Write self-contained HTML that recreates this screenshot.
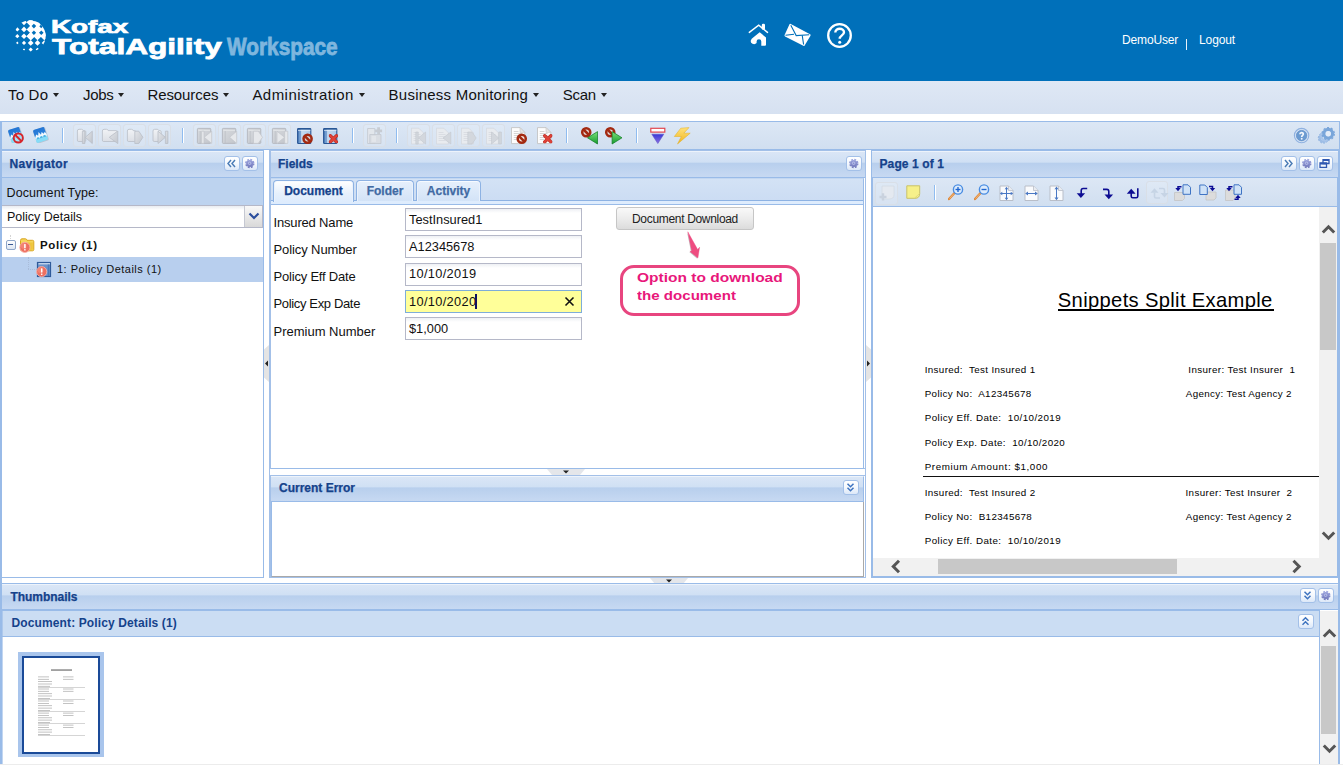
<!DOCTYPE html>
<html>
<head>
<meta charset="utf-8">
<title>Kofax TotalAgility Workspace</title>
<style>
*{box-sizing:border-box;margin:0;padding:0}
html,body{width:1343px;height:765px;overflow:hidden;background:#fff;font-family:"Liberation Sans",sans-serif;}
body{position:relative}
.abs{position:absolute}
#hdr{position:absolute;left:0;top:0;width:1343px;height:81px;background:#0070ba}
#menu{position:absolute;left:0;top:81px;width:1343px;height:33px;background:linear-gradient(#dfe8f5,#d6e1f1)}
#menu .mi{position:absolute;top:5px;font-size:15px;color:#111;line-height:18px;white-space:nowrap}
#menu .ar{position:absolute;top:12px;width:0;height:0;border-left:3px solid transparent;border-right:3px solid transparent;border-top:4px solid #222}
#tb{position:absolute;left:0;top:121px;width:1340px;height:29px;border:1px solid #99bbe8;border-left-width:2px;border-right-width:1px;border-bottom-width:1.500px;background:linear-gradient(#dce7f5,#d1dff0)}
.dbtn{position:absolute;top:1.500px;width:22.500px;height:23px;border:1px solid #d9dfe7;border-radius:3px;background:rgba(255,255,255,0.12)}
.sep{position:absolute;top:6px;width:2px;height:15px;border-left:1px solid #8fbcf0;border-right:1px solid #fff}
.ico{position:absolute;width:16px;height:16px}
.panel{position:absolute;border:1px solid #99bbe8;background:#fff}
.phd{position:absolute;left:0;top:0;right:0;height:27px;border-bottom:1px solid #99bbe8;background:linear-gradient(#dae6f6 0%,#d0e0f4 40%,#b8cfed 46%,#c7d9f2 100%);border-top:1px solid #edf3fb}
.phd .t{position:absolute;left:7px;top:5px;font-size:12px;font-weight:bold;color:#15428b;-webkit-text-stroke:0.250px #15428b;line-height:15px;white-space:nowrap}
.tool{position:absolute;margin-top:-0.800px;width:16px;height:15px;border:1px solid #a3c0e8;border-radius:3px;background:linear-gradient(#ffffff 0%,#f4f8fd 50%,#dce8f8 100%)}
.tool svg{position:absolute;left:0.200px;top:0}
.lbl{position:absolute;left:2.500px;font-size:13px;color:#111;line-height:16px;white-space:nowrap}
.inp{position:absolute;left:134px;width:177px;height:23px;border:1px solid #b5b8c8;background:#fff linear-gradient(#eef0f4,#fff 4px);font-size:12.800px;color:#111;line-height:16px;padding:2px 0 0 3px;white-space:nowrap}
.dl{position:absolute;font-size:9.800px;color:#000;line-height:12px;white-space:pre}
.tab{position:absolute;top:29px;height:21px;border:1px solid #8db2e3;border-bottom:0;border-radius:4px 4px 0 0;background:linear-gradient(#e6f0fc,#d3e3f7);box-shadow:inset 0 1px 0 #f6faff,inset 1px 0 0 #eaf2fc,inset -1px 0 0 #eaf2fc;font-size:12px;font-weight:bold;color:#416aa3;-webkit-text-stroke:0.250px #416aa3;text-align:center;line-height:15px;padding-top:2.500px}
.tab.act{height:22px;background:linear-gradient(#ffffff,#e6f0fc 60%,#deecfd);color:#15428b;-webkit-text-stroke:0.250px #15428b}
#tb svg{overflow:visible}
</style>
</head>
<body>
<div id="hdr">
<svg class="abs" style="left:0;top:0" width="60" height="70"><defs><clipPath id="gc"><circle cx="30" cy="36" r="15.700"/></clipPath></defs><g clip-path="url(#gc)" fill="#fff"><path d="M21.10 22.35L24.00 19.45L26.90 22.35L24.00 25.25Z"/><path d="M27.10 22.35L30.70 18.75L34.30 22.35L30.70 25.95Z"/><path d="M15.10 29.40L17.30 27.20L19.50 29.40L17.30 31.60Z"/><path d="M21.20 29.40L24.00 26.60L26.80 29.40L24.00 32.20Z"/><path d="M15.20 36.20L17.30 34.10L19.40 36.20L17.30 38.30Z"/><path d="M21.20 36.20L24.00 33.40L26.80 36.20L24.00 39.00Z"/><path d="M16.00 42.90L17.30 41.60L18.60 42.90L17.30 44.20Z"/><path d="M21.90 42.90L24.00 40.80L26.10 42.90L24.00 45.00Z"/><path d="M27.80 42.90L30.70 40.00L33.60 42.90L30.70 45.80Z"/><path d="M34.70 42.90L37.50 40.10L40.30 42.90L37.50 45.70Z"/><path d="M41.70 42.90L44.30 40.30L46.90 42.90L44.30 45.50Z"/><path d="M22.80 49.60L24.00 48.40L25.20 49.60L24.00 50.80Z"/><path d="M28.60 49.60L30.70 47.50L32.80 49.60L30.70 51.70Z"/><path d="M35.70 49.60L37.50 47.80L39.30 49.60L37.50 51.40Z"/><rect x="30.7" y="22.35" width="17" height="13.85"/><path d="M26.50 22.35L30.70 18.15L34.90 22.35L30.70 26.55Z"/><path d="M26.60 36.20L30.70 32.10L34.80 36.20L30.70 40.30Z"/><path d="M33.30 22.35L37.50 18.15L41.70 22.35L37.50 26.55Z"/><path d="M33.40 36.20L37.50 32.10L41.60 36.20L37.50 40.30Z"/><path d="M40.10 22.35L44.30 18.15L48.50 22.35L44.30 26.55Z"/><path d="M40.20 36.20L44.30 32.10L48.40 36.20L44.30 40.30Z"/><path d="M26.60 29.40L30.70 25.30L34.80 29.40L30.70 33.50Z"/><path d="M26.60 36.20L30.70 32.10L34.80 36.20L30.70 40.30Z"/><path d="M31.60 26.10L33.90 23.80L36.20 26.10L33.90 28.40Z" fill="#0070ba"/><path d="M39.30 26.30L41.20 24.40L43.10 26.30L41.20 28.20Z" fill="#0070ba"/><path d="M31.70 32.80L33.90 30.60L36.10 32.80L33.90 35.00Z" fill="#0070ba"/><path d="M39.00 32.80L41.30 30.50L43.60 32.80L41.30 35.10Z" fill="#0070ba"/></g></svg>
<div class="abs" style="left:51px;top:15.500px;font-size:18.200px;font-weight:bold;color:#fff;line-height:22px;-webkit-text-stroke:0.700px #fff;transform-origin:0 0;transform:scaleX(1.53);white-space:nowrap">Kofax</div>
<div class="abs" style="left:51.500px;top:34px;font-size:22.500px;font-weight:bold;color:#fff;line-height:26px;-webkit-text-stroke:0.750px #fff;transform-origin:0 0;transform:scaleX(1.405);white-space:nowrap">TotalAgility</div>
<div class="abs" style="left:227px;top:34px;font-size:23px;font-weight:bold;color:#7fb6de;line-height:26px;-webkit-text-stroke:0.800px #7fb6de;transform-origin:0 0;transform:scaleX(0.905);white-space:nowrap">Workspace</div>
<svg class="abs" style="left:746px;top:20px" width="28" height="30" viewBox="0 0 28 30"><path d="M3.300 12.400 L12.700 5.100 L21.500 12.400" fill="none" stroke="#fff" stroke-width="1.400" stroke-linecap="round"/><rect x="15.800" y="3.800" width="3.200" height="6" rx="1.300" fill="#fff"/><path d="M13.700 12.300 L20 17.500 L20 24.800 Q20 25.800 19 25.800 L15.300 25.800 L15.300 21.500 Q15.300 19.300 13 19.300 Q10.600 19.300 10.600 21.500 L10.600 23 Q9 24.800 6.500 23.800 Q4.300 22.800 4.800 20.500 Q5.300 18.500 7.500 17.300 Z" fill="#fff"/></svg>
<svg class="abs" style="left:782px;top:22px" width="32" height="28" viewBox="0 0 32 28"><path d="M8.300 2.800 L27.600 13.200 L21.800 22.900 L3.500 13.500 Z" fill="#fff" stroke="#fff" stroke-width="2" stroke-linejoin="round"/><path d="M8.800 3.200 L14.200 13.600 L27.200 12.800 M3.500 13.200 L12 12.200 M21.600 22.500 L20.300 13.800" fill="none" stroke="#0070ba" stroke-width="1.100"/></svg>
<svg class="abs" style="left:825px;top:21px" width="30" height="30" viewBox="0 0 30 30"><circle cx="14.500" cy="14.500" r="11.300" fill="none" stroke="#fff" stroke-width="2.300"/><path d="M10.300 11.500 C10.300 6.500 19 6.500 19 11.300 C19 14.500 14.700 14.300 14.700 17.800" fill="none" stroke="#fff" stroke-width="2.400"/><circle cx="14.700" cy="21.300" r="1.500" fill="#fff"/></svg>
<div class="abs" style="left:1122px;top:33px;font-size:12px;color:#fff;line-height:14px;white-space:nowrap;letter-spacing:-0.150px">DemoUser</div>
<div class="abs" style="left:1185.500px;top:39px;width:1.500px;height:10.500px;background:#e8f1f9"></div>
<div class="abs" style="left:1199px;top:33px;font-size:12px;color:#fff;line-height:14px;white-space:nowrap;letter-spacing:-0.100px">Logout</div>
</div>
<div id="menu">
<div class="mi" style="left:8px;letter-spacing:0.2px">To Do</div><div class="ar" style="left:53px"></div>
<div class="mi" style="left:83px;letter-spacing:-0.3px">Jobs</div><div class="ar" style="left:118px"></div>
<div class="mi" style="left:147.5px;letter-spacing:-0.1px">Resources</div><div class="ar" style="left:223px"></div>
<div class="mi" style="left:252.4px;letter-spacing:0.46px">Administration</div><div class="ar" style="left:359px"></div>
<div class="mi" style="left:388.6px;letter-spacing:0.23px">Business Monitoring</div><div class="ar" style="left:533px"></div>
<div class="mi" style="left:562.8px;letter-spacing:-0.3px">Scan</div><div class="ar" style="left:601px"></div>
</div>
<svg width="0" height="0" style="position:absolute">
<defs>
<linearGradient id="gGrey" x1="0" y1="0" x2="0" y2="1"><stop offset="0" stop-color="#dfe3e8"/><stop offset="1" stop-color="#c6ccd4"/></linearGradient>
<linearGradient id="gBlueImg" x1="0" y1="0" x2="0" y2="1"><stop offset="0" stop-color="#2375d4"/><stop offset="0.600" stop-color="#2f86de"/><stop offset="0.610" stop-color="#a6e4f8"/><stop offset="1" stop-color="#7ed8f6"/></linearGradient>
<linearGradient id="gFoldL" x1="0" y1="0" x2="0" y2="1"><stop offset="0" stop-color="#f1f3f6"/><stop offset="1" stop-color="#dcdfe5"/></linearGradient><linearGradient id="gArrG" x1="0" y1="0" x2="1" y2="1"><stop offset="0" stop-color="#e3e5e9"/><stop offset="1" stop-color="#c2c6cd"/></linearGradient><linearGradient id="gBookG" x1="0" y1="0" x2="1" y2="1"><stop offset="0" stop-color="#d8dbdf"/><stop offset="1" stop-color="#c3c6cc"/></linearGradient><linearGradient id="gGear" x1="0" y1="1.500" x2="0" y2="11" gradientUnits="userSpaceOnUse"><stop offset="0" stop-color="#a3ace3"/><stop offset="1" stop-color="#6d74b9"/></linearGradient><linearGradient id="gGreen" x1="0" y1="0" x2="0" y2="1"><stop offset="0" stop-color="#7be27b"/><stop offset="1" stop-color="#149a2c"/></linearGradient>
<linearGradient id="gPurple" x1="0" y1="0" x2="0" y2="1"><stop offset="0" stop-color="#3a3ad8"/><stop offset="1" stop-color="#8a6fe0"/></linearGradient>
<linearGradient id="gYel" x1="0" y1="0" x2="0" y2="1"><stop offset="0" stop-color="#ffe27a"/><stop offset="1" stop-color="#f0b41c"/></linearGradient>
<linearGradient id="gBook" x1="0" y1="0" x2="1" y2="0"><stop offset="0" stop-color="#3a6cb0"/><stop offset="0.220" stop-color="#8fb6de"/><stop offset="0.300" stop-color="#c6dbf0"/><stop offset="1" stop-color="#a9c8e8"/></linearGradient>
<symbol id="sImg" viewBox="0 0 16 16"><g transform="rotate(-18.600 7.500 8) translate(7.500 8) scale(1.070) translate(-7.500 -8)"><rect x="1.900" y="1.800" width="11.800" height="13.200" rx="1.500" fill="#9aa7b5" opacity="0.500"/><rect x="2" y="1.600" width="11" height="12.500" rx="1.500" fill="url(#gBlueImg)"/><path d="M2 8.800 L3.800 6.300 L5.200 8 L6.600 4.800 L8 8 L9.400 5.600 L10.800 7.800 L11.900 6.500 L13 8 L13 10.300 L2 10.300 Z" fill="#eef8fe"/><circle cx="4.300" cy="10.600" r="1.400" fill="#4fb6e6"/><circle cx="7.500" cy="10.600" r="1.400" fill="#4fb6e6"/><circle cx="10.700" cy="10.600" r="1.400" fill="#4fb6e6"/><rect x="2" y="11" width="11" height="3.100" rx="1" fill="#86dcf7"/></g></symbol>
<symbol id="sNo" viewBox="0 0 10 10"><circle cx="5" cy="5" r="3.800" fill="#bfe9fa" fill-opacity="0.600" stroke="#d6262c" stroke-width="1.600"/><path d="M2.300 2.300 L7.700 7.700" stroke="#d6262c" stroke-width="1.600"/></symbol>
<symbol id="sNoD" viewBox="0 0 10 10"><circle cx="5" cy="5" r="3.500" fill="#ecd5cc" fill-opacity="0.600" stroke="#a32a12" stroke-width="2.200"/><path d="M2.400 2.400 L7.600 7.600" stroke="#a32a12" stroke-width="2.200"/></symbol>
<symbol id="sX" viewBox="0 0 10 10"><path d="M1.800 1.800 L8.200 8.200 M8.200 1.800 L1.800 8.200" stroke="#b8281f" stroke-width="3.400" stroke-linecap="round"/><path d="M1.800 1.800 L8.200 8.200 M8.200 1.800 L1.800 8.200" stroke="#de4238" stroke-width="2.300" stroke-linecap="round"/></symbol>
<symbol id="sFold" viewBox="0 0 16 16"><path d="M1.500 3.500 Q1.500 2 3 2 L6.500 2 Q7.800 2 8 3 L11 3 Q12 3 12 4.200 L12 12.500 Q12 13.500 11 13.500 L2.500 13.500 Q1.500 13.500 1.500 12.500 Z" fill="url(#gGrey)" stroke="#cdd3db" stroke-width="0.6"/></symbol>
<symbol id="sBookG" viewBox="0 0 16 16"><path d="M1.500 1.500 L13.500 1.500 L13.500 14.500 L1.500 14.500 Z" fill="url(#gGrey)" stroke="#c4cad2" stroke-width="0.8"/><path d="M3.800 2 L3.800 14" stroke="#c0c6ce" stroke-width="0.8"/><path d="M2 3.500 L13 3.500" stroke="#e9ecf0" stroke-width="0.8"/></symbol>
<symbol id="sBookB" viewBox="0 0 16 18"><rect x="0.600" y="1.500" width="13.200" height="15" rx="0.800" fill="url(#gBook)" stroke="#2a5796" stroke-width="1.100"/><path d="M1 3.300 H13.400" stroke="#e9f1fa" stroke-width="0.800"/><path d="M0.800 2.300 H13.600" stroke="#2a5796" stroke-width="0.800"/><path d="M3.600 4 V16" stroke="#6f98cb" stroke-width="0.800"/></symbol>
<symbol id="sPageG" viewBox="0 0 16 18"><path d="M0.400 1.200 L7.800 1.200 L12.400 5.800 L12.400 17 L0.400 17 Z" fill="#e8ebef" stroke="#d2d6dc" stroke-width="0.700"/><path d="M2.600 5.500 H7.500 M2.600 7.500 H9.500 M2.600 9.500 H9.500 M2.600 11.500 H9.500 M2.600 13.500 H9.500" stroke="#d5d9df" stroke-width="0.800"/></symbol>
<symbol id="sPageW" viewBox="0 0 16 18"><path d="M0.500 0.600 L9 0.600 L13.800 5.400 L13.800 16.600 L0.500 16.600 Z" fill="#fcfcfc" stroke="#c4c4c4" stroke-width="0.900"/><path d="M9 0.600 L9 5.400 L13.800 5.400 Z" fill="#e6e6e6" stroke="#c4c4c4" stroke-width="0.600"/><path d="M2.800 4.500 H7.500 M2.800 6.500 H10.500 M2.800 8.500 H10.500 M2.800 10.500 H8 M2.800 12.500 H7" stroke="#cbcbcb" stroke-width="0.800"/></symbol>
</defs></svg>

<div id="tb">
<svg class="abs" style="left:5.5px;top:5px" width="16" height="16" viewBox="0 0 16 16"><use href="#sImg" x="0" y="0" width="16" height="16"/><use href="#sNo" x="4.300" y="5" width="12" height="12"/></svg>
<svg class="abs" style="left:31px;top:5px" width="16" height="16" viewBox="0 0 16 16"><use href="#sImg" x="0" y="0" width="16" height="16"/></svg>
<div class="sep" style="left:60px"></div>
<div class="dbtn" style="left:71px"></div>
<div class="dbtn" style="left:96px"></div>
<div class="dbtn" style="left:121px"></div>
<div class="dbtn" style="left:146px"></div>
<svg class="abs" style="left:75px;top:5px" width="16" height="16" viewBox="0 0 16 16"><path d="M0.4 4 Q0.4 2.300 2.0 2.300 L4.6000000000000005 2.300 Q5.800000000000001 2.300 6.2 3.600 L7.6000000000000005 3.600 Q8.8 3.600 8.8 4.800 L8.8 13.200 Q8.8 14.500 7.6000000000000005 14.500 L1.6 14.500 Q0.4 14.500 0.4 13.200 Z" fill="url(#gFoldL)" stroke="#b9bec6" stroke-width="0.800" stroke-linejoin="round"/><rect x="5.400" y="4.200" width="2.500" height="12.300" fill="url(#gArrG)" stroke="#b9bec6" stroke-width="0.800" stroke-linejoin="round"/><path d="M15.300 4.200 L8.300 10.300 L15.300 16.500 Z" fill="url(#gArrG)" stroke="#b9bec6" stroke-width="0.800" stroke-linejoin="round"/></svg>
<svg class="abs" style="left:100px;top:5px" width="16" height="16" viewBox="0 0 16 16"><path d="M0.4 4 Q0.4 2.300 2.0 2.300 L4.6000000000000005 2.300 Q5.800000000000001 2.300 6.2 3.600 L14.0 3.600 Q15.2 3.600 15.2 4.800 L15.2 13.200 Q15.2 14.500 14.0 14.500 L1.6 14.500 Q0.4 14.500 0.4 13.200 Z" fill="url(#gFoldL)" stroke="#b9bec6" stroke-width="0.800" stroke-linejoin="round"/><path d="M15.800 4 L7.300 10.300 L15.800 16.600 Z" fill="url(#gArrG)" stroke="#b9bec6" stroke-width="0.800" stroke-linejoin="round"/></svg>
<svg class="abs" style="left:125px;top:5px" width="16" height="16" viewBox="0 0 16 16"><path d="M0.4 4 Q0.4 2.300 2.0 2.300 L4.6000000000000005 2.300 Q5.800000000000001 2.300 6.2 3.600 L7.6000000000000005 3.600 Q8.8 3.600 8.8 4.800 L8.8 13.200 Q8.8 14.500 7.6000000000000005 14.500 L1.6 14.500 Q0.4 14.500 0.4 13.200 Z" fill="url(#gFoldL)" stroke="#b9bec6" stroke-width="0.800" stroke-linejoin="round"/><path d="M7.800 4.200 L11.800 4.200 L15.900 10.300 L11.800 16.500 L7.800 16.500 Z" fill="url(#gArrG)" stroke="#b9bec6" stroke-width="0.800" stroke-linejoin="round"/></svg>
<svg class="abs" style="left:150px;top:5px" width="16" height="16" viewBox="0 0 16 16"><path d="M1 4 Q1 2.300 2.6 2.300 L5.2 2.300 Q6.4 2.300 6.8 3.600 L7.999999999999999 3.600 Q9.2 3.600 9.2 4.800 L9.2 13.200 Q9.2 14.500 7.999999999999999 14.500 L2.2 14.500 Q1 14.500 1 13.200 Z" fill="url(#gFoldL)" stroke="#b9bec6" stroke-width="0.800" stroke-linejoin="round"/><path d="M6 4.200 L13.400 10.300 L6 16.500 Z" fill="url(#gArrG)" stroke="#b9bec6" stroke-width="0.800" stroke-linejoin="round"/><rect x="13.400" y="4.200" width="2.500" height="12.300" fill="url(#gArrG)" stroke="#b9bec6" stroke-width="0.800" stroke-linejoin="round"/></svg>
<div class="sep" style="left:180px"></div>
<div class="dbtn" style="left:191px"></div>
<div class="dbtn" style="left:216px"></div>
<div class="dbtn" style="left:241px"></div>
<div class="dbtn" style="left:266px"></div>
<svg class="abs" style="left:195px;top:5px" width="16" height="16" viewBox="0 0 16 16"><rect x="0.400" y="1.400" width="13.400" height="15" rx="0.800" fill="url(#gBookG)" stroke="#b3b7bd" stroke-width="0.900"/><path d="M1.200 3.400 H13" stroke="#e3e5e8" stroke-width="0.900"/><path d="M3.200 4 V16" stroke="#bbbfc5" stroke-width="0.800"/><rect x="4.600" y="4.200" width="2.400" height="12.200" fill="#e6e8eb" stroke="#c3c6cc" stroke-width="0.700" stroke-linejoin="round"/><path d="M14.700 4.200 L7.200 10.300 L14.700 16.400 Z" fill="#e6e8eb" stroke="#c3c6cc" stroke-width="0.700" stroke-linejoin="round"/></svg>
<svg class="abs" style="left:220px;top:5px" width="16" height="16" viewBox="0 0 16 16"><rect x="0.400" y="1.400" width="13.400" height="15" rx="0.800" fill="url(#gBookG)" stroke="#b3b7bd" stroke-width="0.900"/><path d="M1.200 3.400 H13" stroke="#e3e5e8" stroke-width="0.900"/><path d="M3.200 4 V16" stroke="#bbbfc5" stroke-width="0.800"/><path d="M14.700 4.200 L7.600 10.300 L14.700 16.400 Z" fill="#e6e8eb" stroke="#c3c6cc" stroke-width="0.700" stroke-linejoin="round"/></svg>
<svg class="abs" style="left:245px;top:5px" width="16" height="16" viewBox="0 0 16 16"><rect x="0.400" y="1.400" width="13.400" height="15" rx="0.800" fill="url(#gBookG)" stroke="#b3b7bd" stroke-width="0.900"/><path d="M1.200 3.400 H13" stroke="#e3e5e8" stroke-width="0.900"/><path d="M3.200 4 V16" stroke="#bbbfc5" stroke-width="0.800"/><path d="M6.500 4.200 L11.300 4.200 L15.500 10.300 L11.300 16.400 L6.500 16.400 Z" fill="#e6e8eb" stroke="#c3c6cc" stroke-width="0.700" stroke-linejoin="round"/></svg>
<svg class="abs" style="left:270px;top:5px" width="16" height="16" viewBox="0 0 16 16"><rect x="0.400" y="1.400" width="13.400" height="15" rx="0.800" fill="url(#gBookG)" stroke="#b3b7bd" stroke-width="0.900"/><path d="M1.200 3.400 H13" stroke="#e3e5e8" stroke-width="0.900"/><path d="M3.200 4 V16" stroke="#bbbfc5" stroke-width="0.800"/><path d="M5 4.200 L12.600 10.300 L5 16.400 Z" fill="#e6e8eb" stroke="#c3c6cc" stroke-width="0.700" stroke-linejoin="round"/><rect x="12.600" y="4.200" width="3.200" height="12.200" fill="#e6e8eb" stroke="#c3c6cc" stroke-width="0.700" stroke-linejoin="round"/></svg>
<svg class="abs" style="left:295px;top:5px" width="16" height="16" viewBox="0 0 16 16"><use href="#sBookB" x="0" y="0" width="16" height="18"/><use href="#sNoD" x="4.850" y="6.050" width="11.500" height="11.500"/></svg>
<svg class="abs" style="left:321px;top:5px" width="16" height="16" viewBox="0 0 16 16"><use href="#sBookB" x="0" y="0" width="16" height="18"/><use href="#sX" x="5.600" y="7" width="9.600" height="9.600"/></svg>
<div class="sep" style="left:350px"></div>
<div class="dbtn" style="left:361px"></div>
<svg class="abs" style="left:365px;top:5px" width="16" height="16" viewBox="0 0 16 16"><path d="M0.600 1.500 H7.800 V16.500 H0.600 Z" fill="#e2e6eb" stroke="#c3c8cf" stroke-width="0.800"/><path d="M2.800 7.500 H14 V16.500 H2.800 Z" fill="#d9dde3" stroke="#c3c8cf" stroke-width="0.800"/><path d="M4.500 10 H9 M4.500 12 H9 M4.500 14 H9" stroke="#eef0f3" stroke-width="0.900"/><path d="M11.600 0.300 V7.300 M8.100 3.800 H15.100" stroke="#c7ccd3" stroke-width="2.800"/></svg>
<div class="sep" style="left:394px"></div>
<div class="dbtn" style="left:405.200px"></div>
<div class="dbtn" style="left:430.200px"></div>
<div class="dbtn" style="left:455.200px"></div>
<div class="dbtn" style="left:480.200px"></div>
<svg class="abs" style="left:408.700px;top:5px" width="16" height="16" viewBox="0 0 16 16"><use href="#sPageG" x="0" y="0" width="16" height="18"/><rect x="4.800" y="5" width="2.400" height="12" fill="#d3d7dd" stroke="#c3c7ce" stroke-width="0.600" stroke-linejoin="round"/><path d="M14.600 5 L7.400 11 L14.600 17 Z" fill="#d3d7dd" stroke="#c3c7ce" stroke-width="0.600" stroke-linejoin="round"/></svg>
<svg class="abs" style="left:433.700px;top:5px" width="16" height="16" viewBox="0 0 16 16"><use href="#sPageG" x="0" y="0" width="16" height="18"/><path d="M14.800 5 L7 11 L14.800 17 Z" fill="#d3d7dd" stroke="#c3c7ce" stroke-width="0.600" stroke-linejoin="round"/></svg>
<svg class="abs" style="left:458.700px;top:5px" width="16" height="16" viewBox="0 0 16 16"><use href="#sPageG" x="0" y="0" width="16" height="18"/><path d="M6.800 5 L11 5 L15.200 11 L11 17 L6.800 17 Z" fill="#d3d7dd" stroke="#c3c7ce" stroke-width="0.600" stroke-linejoin="round"/></svg>
<svg class="abs" style="left:483.700px;top:5px" width="16" height="16" viewBox="0 0 16 16"><use href="#sPageG" x="0" y="0" width="16" height="18"/><path d="M5.500 5 L12.800 11 L5.500 17 Z" fill="#d3d7dd" stroke="#c3c7ce" stroke-width="0.600" stroke-linejoin="round"/><rect x="12.800" y="5" width="2.600" height="12" fill="#d3d7dd" stroke="#c3c7ce" stroke-width="0.600" stroke-linejoin="round"/></svg>
<svg class="abs" style="left:509px;top:5px" width="16" height="16" viewBox="0 0 16 16"><use href="#sPageW" x="0" y="0" width="16" height="18"/><use href="#sNoD" x="5" y="6.050" width="11.500" height="11.500"/></svg>
<svg class="abs" style="left:534.500px;top:5px" width="16" height="16" viewBox="0 0 16 16"><use href="#sPageW" x="0" y="0" width="16" height="18"/><use href="#sX" x="6" y="7" width="9.600" height="9.600"/></svg>
<div class="sep" style="left:564px"></div>
<svg class="abs" style="left:578.5px;top:5px" width="16" height="16" viewBox="0 0 16 16"><use href="#sNoD" x="-0.500" y="-0.500" width="11.500" height="11.500"/><path d="M16.500 4.600 L6.500 10.800 L16.500 17 Z" fill="url(#gGreen)" stroke="#0d7a22" stroke-width="0.700" stroke-linejoin="round"/></svg>
<svg class="abs" style="left:603px;top:5px" width="16" height="16" viewBox="0 0 16 16"><use href="#sNoD" x="-0.500" y="-0.500" width="11.500" height="11.500"/><path d="M7.100 4.600 L17 10.800 L7.100 17 Z" fill="url(#gGreen)" stroke="#0d7a22" stroke-width="0.700" stroke-linejoin="round"/></svg>
<div class="sep" style="left:634px"></div>
<svg class="abs" style="left:647.5px;top:5px" width="16" height="16" viewBox="0 0 16 16"><rect x="0.800" y="1.300" width="14" height="3.800" fill="#fff" stroke="#e2474f" stroke-width="1.200"/><path d="M1.800 7.200 L13.800 7.200 L7.800 16.600 Z" fill="url(#gPurple)" stroke="#5a4cc0" stroke-width="0.5"/></svg>
<svg class="abs" style="left:672px;top:5px" width="16" height="16" viewBox="0 0 16 16"><path d="M6.800 1.200 L15 0.600 L9.800 6.200 L16.200 6.200 L3.500 17 L7.300 9.500 L0.300 9.500 Z" fill="url(#gYel)" stroke="#e3ad1e" stroke-width="0.500"/></svg>
<svg class="abs" style="left:1291px;top:5px" width="18" height="18" viewBox="0 0 18 18"><circle cx="8.600" cy="8.600" r="7.200" fill="#dbe7f6" stroke="#8fb1e0" stroke-width="1.100"/><circle cx="8.600" cy="8.600" r="5.300" fill="#6c9bd1"/><circle cx="8.600" cy="8.600" r="5.300" fill="none" stroke="#5a8ac4" stroke-width="0.600"/><path d="M6.900 7.300 C6.900 5.100 10.300 5.100 10.300 7.100 C10.300 8.400 8.700 8.300 8.700 9.900" fill="none" stroke="#f2f6fb" stroke-width="1.700"/><circle cx="8.700" cy="11.700" r="0.950" fill="#f2f6fb"/></svg>
<svg class="abs" style="left:1315px;top:4px" width="20" height="20" viewBox="0 0 20 20"><g fill="none"><circle cx="6.500" cy="12" r="3.800" stroke="#9dbde6" stroke-width="2.600"/><circle cx="6.500" cy="12" r="5.200" stroke="#8fb3e1" stroke-width="1" stroke-dasharray="1.800 1.400"/><circle cx="8.500" cy="10.300" r="4.200" stroke="#a9c5ea" stroke-width="2.400"/><circle cx="11.200" cy="7.700" r="4.300" stroke="#7aa6da" stroke-width="3.200"/><circle cx="11.200" cy="7.700" r="6.100" stroke="#7aa6da" stroke-width="1.300" stroke-dasharray="2.100 1.730"/></g><circle cx="11.200" cy="7.700" r="2.700" fill="#e3ecf8"/></svg>
</div>
<div class="panel" style="left:0;top:150px;width:264px;height:428px;border-left-width:2px">
<div class="phd"><div class="t" style="left:7.500px;letter-spacing:0.350px">Navigator</div>
<div class="tool" style="left:222px;top:4.500px"><svg width="13" height="13" viewBox="0 0 13 13"><path d="M6 3 L3 6.500 L6 10 M10 3 L7 6.500 L10 10" fill="none" stroke="#4a7bb5" stroke-width="1.450"/></svg></div>
<div class="tool" style="left:240px;top:4.500px"><svg width="13" height="13" viewBox="0 0 13 13"><circle cx="6.800" cy="6.500" r="3.950" fill="none" stroke="url(#gGear)" stroke-width="1.500" stroke-dasharray="1.850 1.252"/><circle cx="6.800" cy="6.500" r="3.600" fill="url(#gGear)"/><circle cx="6.600" cy="6.300" r="1.250" fill="none" stroke="#c3c9ee" stroke-width="0.800"/></svg></div></div>
<div class="abs" style="left:0;top:27px;width:261px;height:27px;background:#bdd3ef"></div>
<div class="abs" style="left:4.500px;top:33.500px;font-size:12.500px;color:#111;line-height:16px;white-space:nowrap;letter-spacing:0.100px">Document Type:</div>
<div class="abs" style="left:0;top:54px;width:261px;height:23px;border:1px solid #b5b8c8;border-left:0;background:#fff linear-gradient(#e9ecf1,#fff 4px)"></div>
<div class="abs" style="left:5px;top:57.500px;font-size:12.500px;color:#111;line-height:16px;white-space:nowrap">Policy Details</div>
<div class="abs" style="left:242px;top:55px;width:18px;height:21px;border-left:1px solid #c5c8d2;background:linear-gradient(#f8f8f8,#d9d9d9)"><svg class="abs" style="left:3px;top:5px" width="12" height="10" viewBox="0 0 12 10"><path d="M1.500 2.500 L6 7 L10.500 2.500" fill="none" stroke="#2b4e9d" stroke-width="2.200"/></svg></div>
<div class="abs" style="left:0;top:106px;width:261px;height:25px;background:#b8cfee"></div>
<div class="abs" style="left:8px;top:84px;width:1px;height:8px;border-left:1px dotted #d4d4d4"></div>
<div class="abs" style="left:26px;top:106px;width:1px;height:12px;border-left:1px dotted #a9bcd9"></div>
<div class="abs" style="left:26px;top:118px;width:9px;height:1px;border-top:1px dotted #a9bcd9"></div>
<div class="abs" style="left:4px;top:89px;width:10px;height:10px;border:1.500px solid #8ea6c9;border-radius:2px;background:linear-gradient(#fff,#dbe5f2)"><div class="abs" style="left:1px;top:2.700px;width:5px;height:1.600px;background:#3a5a94"></div></div>
<svg class="abs" style="left:14.500px;top:85.500px" width="18" height="18" viewBox="0 0 18 18"><path d="M3.500 3.500 Q3.500 1.800 5 1.800 L8.500 1.800 Q9.600 1.800 10 3.300 L15.500 3.300 Q16.800 3.300 16.800 4.600 L16.800 12.500 Q16.800 13.800 15.500 13.800 L4.800 13.800 Q3.500 13.800 3.500 12.500 Z" fill="#f6d55a" stroke="#d9a520" stroke-width="1"/><path d="M10.500 5.500 L15.800 5.500 L15.800 12.800 L12 12.800 Z" fill="#eec234" opacity="0.8"/><circle cx="7.9" cy="10.4" r="5.100" fill="#ee6f60" stroke="#f6b1a8" stroke-width="0.900"/><circle cx="6.7" cy="8.9" r="2.800" fill="#f58c7e" opacity="0.7"/><rect x="7.15" y="7.0" width="1.500" height="4.300" rx="0.500" fill="#fff"/><rect x="7.15" y="12.1" width="1.500" height="1.500" rx="0.400" fill="#fff"/></svg>
<div class="abs" style="left:38px;top:86.500px;font-size:11.500px;font-weight:bold;color:#111;line-height:14px;white-space:nowrap;letter-spacing:0.650px">Policy (1)</div>
<svg class="abs" style="left:34px;top:110px" width="18" height="18" viewBox="0 0 18 18"><rect x="1.500" y="1.500" width="13" height="14" fill="#6a93cb" stroke="#2f5a9a" stroke-width="1.200"/><path d="M2.500 2.800 H14" stroke="#e6eef9" stroke-width="1"/><path d="M12.500 3.500 V15" stroke="#4a78b8" stroke-width="1.500"/><circle cx="5.7" cy="10.7" r="5.100" fill="#ee6f60" stroke="#f6b1a8" stroke-width="0.900"/><circle cx="4.5" cy="9.2" r="2.800" fill="#f58c7e" opacity="0.7"/><rect x="4.95" y="7.299999999999999" width="1.500" height="4.300" rx="0.500" fill="#fff"/><rect x="4.95" y="12.399999999999999" width="1.500" height="1.500" rx="0.400" fill="#fff"/></svg>
<div class="abs" style="left:55px;top:111px;font-size:11px;color:#111;line-height:14px;white-space:nowrap;letter-spacing:0.470px">1: Policy Details (1)</div>
</div>
<div class="panel" style="left:269px;top:150px;width:597px;height:319px;border-left-width:2px;border-color:#a3c0e8">
<div class="phd"><div class="t" style="left:7px">Fields</div><div class="tool" style="left:574.500px;top:4.500px"><svg width="13" height="13" viewBox="0 0 13 13"><circle cx="6.800" cy="6.500" r="3.950" fill="none" stroke="url(#gGear)" stroke-width="1.500" stroke-dasharray="1.850 1.252"/><circle cx="6.800" cy="6.500" r="3.600" fill="url(#gGear)"/><circle cx="6.600" cy="6.300" r="1.250" fill="none" stroke="#c3c9ee" stroke-width="0.800"/></svg></div></div>
<div class="abs" style="left:0;top:27px;width:593px;height:291px;border:1px solid #99bbe8;border-left:0;border-top-color:#c3d7f1;background:#fff"></div>
<div class="abs" style="left:0;top:28px;width:592px;height:23px;background:linear-gradient(#d3e2f5,#cbdcf3)"></div>
<div class="abs" style="left:0;top:49px;width:592px;height:5px;background:#deecfd;border-top:1px solid #8db2e3;border-bottom:1px solid #99bbe8"></div>
<div class="tab act" style="left:2px;width:81px"><span>Document</span></div>
<div class="tab" style="left:85px;width:58px"><span>Folder</span></div>
<div class="tab" style="left:145px;width:65px"><span>Activity</span></div>
<div class="lbl" style="top:63.5px;letter-spacing:-0.17px">Insured Name</div>
<div class="inp" style="top:57px;padding-top:3px">TestInsured1</div>
<div class="lbl" style="top:90.5px;letter-spacing:-0.1px">Policy Number</div>
<div class="inp" style="top:84px;padding-top:2.600px">A12345678</div>
<div class="lbl" style="top:117.500px;letter-spacing:-0.2px">Policy Eff Date</div>
<div class="inp" style="top:112px;letter-spacing:0.33px">10/10/2019</div>
<div class="lbl" style="top:145px;letter-spacing:-0.35px">Policy Exp Date</div>
<div class="inp" style="top:139px;padding-top:3px;background:#ffff99;border-color:#7eadd9;letter-spacing:0.33px">10/10/2020<span style="display:inline-block;width:1.500px;height:15px;background:#101060;vertical-align:-3px;margin-left:-1px"></span><svg class="abs" style="left:157.500px;top:4.800px" width="11" height="11" viewBox="0 0 11 11"><path d="M1.500 1.500 L9.500 9.500 M9.500 1.500 L1.500 9.500" stroke="#111" stroke-width="1.600"/></svg></div>
<div class="lbl" style="top:172.5px;letter-spacing:0px">Premium Number</div>
<div class="inp" style="top:166px;padding-top:3px">$1,000</div>
<div class="abs" style="left:345px;top:56px;width:138px;height:23px;border:1px solid #c6c6c6;border-radius:3px;background:linear-gradient(#f9f9f9 0%,#ececec 50%,#dcdcdc 100%);font-size:12px;color:#222;line-height:14px;text-align:center;padding-top:4px;letter-spacing:-0.320px">Document Download</div>
<svg class="abs" style="left:400px;top:76px" width="50" height="40" viewBox="0 0 50 40"><path d="M16.800 4.800 L26.700 22.600 L28.600 20.200 L26.900 31 L18.900 24.400 L20.700 24.100 Z" fill="#555" opacity="0.350" transform="translate(-0.700 0.700)"/><path d="M16.800 4.800 L26.700 22.600 L28.600 20.200 L26.900 31 L18.900 24.400 L20.700 24.100 Z" fill="#ee4c80" stroke="#ee4c80" stroke-width="0.400" stroke-linejoin="round"/></svg>
<div class="abs" style="left:349px;top:114px;width:180px;height:51px;border:3.600px solid #e8457f;border-radius:14px;background:#fff"></div>
<div class="abs" style="left:366px;top:118.200px;font-size:12.500px;font-weight:bold;color:#e8177b;line-height:18px;white-space:nowrap;transform-origin:0 0;transform:scaleX(1.242)">Option to download</div>
<div class="abs" style="left:366px;top:136.200px;font-size:12.500px;font-weight:bold;color:#e8177b;line-height:18px;white-space:nowrap;transform-origin:0 0;transform:scaleX(1.207)">the document</div>
</div>
<svg class="abs" style="left:547px;top:469px" width="40" height="6" viewBox="0 0 40 6"><path d="M0 0 H38 L33 6 H5 Z" fill="#e4e6ea"/><path d="M16 1.500 H22 L19 4.500 Z" fill="#222"/></svg>
<div class="panel" style="left:269px;top:475px;width:597px;height:103px;border-left-width:2px;border-color:#a3c0e8">
<div class="phd" style="height:26px;right:1px;border-right:1px solid #99bbe8"><div class="t" style="left:8px;top:4px">Current Error</div><div class="tool" style="left:571.500px;top:3.500px"><svg width="13" height="13" viewBox="0 0 13 13"><path d="M3.500 2.800 L6.500 5.800 L9.500 2.800 M3.500 6.800 L6.500 9.800 L9.500 6.800" fill="none" stroke="#3f74c0" stroke-width="1.500"/></svg></div></div>
<div class="abs" style="left:0;top:26px;width:593px;height:74.500px;border:1px solid #99bbe8;border-top:0;border-right:1.500px solid #a9a9a9;border-bottom:1.500px solid #a9a9a9;background:#fff"></div>
</div>
<svg class="abs" style="left:264px;top:345px" width="5" height="37" viewBox="0 0 5 37"><path d="M5 0 V37 L0 32.500 V4.500 Z" fill="#e4e4e4"/><path d="M4 15.500 V21.500 L1 18.500 Z" fill="#222"/></svg>
<svg class="abs" style="left:866px;top:345px" width="5" height="37" viewBox="0 0 5 37"><path d="M0 0 V37 L5 32.500 V4.500 Z" fill="#e4e4e4"/><path d="M1 15.500 V21.500 L4 18.500 Z" fill="#222"/></svg>
<svg class="abs" style="left:650px;top:578px" width="40" height="6" viewBox="0 0 40 6"><path d="M0 0 H38 L33 6 H5 Z" fill="#e4e6ea"/><path d="M16 1.500 H22 L19 4.500 Z" fill="#222"/></svg>
<div id="fgap" class="abs" style="left:269px;top:468px;width:1px;height:8px;background:#a3c0e8"></div>
<div class="abs" style="left:865px;top:468px;width:1px;height:8px;background:#a3c0e8"></div>
<div class="panel" style="left:871px;top:150px;width:469px;height:428px;border-right-width:2px;border-bottom-width:2px">
<div class="phd"><div class="t" style="left:7.500px;letter-spacing:0.100px">Page 1 of 1</div><div class="tool" style="left:408.600px;top:4.300px"><svg width="13" height="13" viewBox="0 0 13 13"><path d="M3 3 L6 6.500 L3 10 M7 3 L10 6.500 L7 10" fill="none" stroke="#4a7bb5" stroke-width="1.450"/></svg></div><div class="tool" style="left:426.800px;top:4.300px"><svg width="13" height="13" viewBox="0 0 13 13"><circle cx="6.800" cy="6.500" r="3.950" fill="none" stroke="url(#gGear)" stroke-width="1.500" stroke-dasharray="1.850 1.252"/><circle cx="6.800" cy="6.500" r="3.600" fill="url(#gGear)"/><circle cx="6.600" cy="6.300" r="1.250" fill="none" stroke="#c3c9ee" stroke-width="0.800"/></svg></div><div class="tool" style="left:444.900px;top:4.300px"><svg width="13" height="13" viewBox="0 0 13 13"><path d="M5 2.600 H11 V6.500 H5 Z M2 6 H8.500 V10.400 H2 Z" fill="#f4f8fd" stroke="#2f57b0" stroke-width="1.300"/><path d="M5 3.200 H11 M2 6.600 H8.500" stroke="#2f57b0" stroke-width="1.600"/></svg></div></div>
<div class="abs" style="left:0;top:27px;width:1px;height:398px;background:#99bbe8"></div><div class="abs" style="left:465px;top:27px;width:1px;height:398px;background:#99bbe8"></div>
<div class="abs" style="left:1px;top:0;width:464px;height:425px">
<div class="abs" style="left:0;top:27px;width:464px;height:29px;border-bottom:1px solid #99bbe8;background:linear-gradient(#dce7f5,#d1dff0)"></div>
<div class="dbtn" style="left:2px;top:30.5px"></div>
<div class="dbtn" style="left:272.500px;top:30px"></div>
<svg class="abs" style="left:6px;top:33.5px" width="16" height="16" viewBox="0 0 16 16"><path d="M3 1 H15 V10 Q15 14 10 14 H3 Z" fill="#e4e9f0" stroke="#d3dae3" stroke-width="0.800"/><path d="M4 8.300 V15.500 M0.500 12 H7.500" stroke="#c9d2de" stroke-width="2.400"/></svg>
<svg class="abs" style="left:32.5px;top:33.5px" width="16" height="16" viewBox="0 0 16 16"><path d="M0.800 0.800 H13.700 V8.500 Q13.700 13.300 9 13.300 H0.800 Z" fill="#f6f08a" stroke="#c9c26a" stroke-width="1"/><path d="M13.700 8.500 Q11.500 10.500 8.500 13.200" fill="none" stroke="#d8d27a" stroke-width="0.800"/></svg>
<div class="sep" style="left:61px;top:34px"></div>
<svg class="abs" style="left:75px;top:33px" width="17" height="17" viewBox="0 0 17 17"><path d="M6.300 9.300 L1 15" stroke="#e08a3c" stroke-width="2.400" stroke-linecap="round"/><path d="M6 9.600 L1.500 14.500" stroke="#f3c08a" stroke-width="0.800"/><circle cx="10" cy="5.500" r="4.600" fill="#dcebfc" stroke="#4a8de2" stroke-width="1.400"/><path d="M7.500 5.500 H12.500" stroke="#1f66d0" stroke-width="1.350"/><path d="M10 3 V8" stroke="#1f66d0" stroke-width="1.350"/></svg>
<svg class="abs" style="left:100.5px;top:33px" width="17" height="17" viewBox="0 0 17 17"><path d="M6.300 9.300 L1 15" stroke="#e08a3c" stroke-width="2.400" stroke-linecap="round"/><path d="M6 9.600 L1.500 14.500" stroke="#f3c08a" stroke-width="0.800"/><circle cx="10" cy="5.500" r="4.600" fill="#dcebfc" stroke="#4a8de2" stroke-width="1.400"/><path d="M7.500 5.500 H12.500" stroke="#1f66d0" stroke-width="1.350"/></svg>
<svg class="abs" style="left:126px;top:34px" width="15" height="17" viewBox="0 0 15 17"><path d="M1 1 H9.500 L14 5.500 V15.500 H1 Z" fill="#fafbfd" stroke="#b9bec8" stroke-width="1"/><path d="M9.500 1 V5.500 H14" fill="#e9ecf1" stroke="#b9bec8" stroke-width="0.800"/><path d="M7.500 3 V14 M2 8.500 H13" stroke="#4a78c4" stroke-width="1" fill="none"/><path d="M7.500 1.800 L5.700 4.300 H9.300 Z M7.500 15.200 L5.700 12.700 H9.300 Z M0.800 8.500 L3.300 6.700 V10.300 Z M14.200 8.500 L11.700 6.700 V10.300 Z" fill="#4a78c4"/></svg>
<svg class="abs" style="left:151px;top:34px" width="15" height="17" viewBox="0 0 15 17"><path d="M1 1 H9.500 L14 5.500 V15.500 H1 Z" fill="#fafbfd" stroke="#b9bec8" stroke-width="1"/><path d="M9.500 1 V5.500 H14" fill="#e9ecf1" stroke="#b9bec8" stroke-width="0.800"/><path d="M2.500 8.500 H12.500" stroke="#4a78c4" stroke-width="1" fill="none"/><path d="M1.200 8.500 L4 6.500 V10.500 Z M13.800 8.500 L11 6.500 V10.500 Z" fill="#4a78c4"/></svg>
<svg class="abs" style="left:176px;top:34px" width="15" height="17" viewBox="0 0 15 17"><path d="M1 1 H9.500 L14 5.500 V15.500 H1 Z" fill="#fafbfd" stroke="#b9bec8" stroke-width="1"/><path d="M9.500 1 V5.500 H14" fill="#e9ecf1" stroke="#b9bec8" stroke-width="0.800"/><path d="M7.500 3 V14" stroke="#4a78c4" stroke-width="1" fill="none"/><path d="M7.500 1.500 L5.500 4.300 H9.500 Z M7.500 15.300 L5.500 12.500 H9.500 Z" fill="#4a78c4"/></svg>
<svg class="abs" style="left:300.5px;top:32.5px" width="18" height="18" viewBox="0 0 18 18"><path d="M0.5 8.5 H10.5 V14.5 L8.5 16.5 H0.5 Z" fill="#dcdcdc" stroke="#c4c4c4" stroke-width="0.800"/><path d="M9 0.8 H14.0 L16.5 3.3 V10.3 H9 Z" fill="#cfe2f7" stroke="#3f74c4" stroke-width="1"/><path d="M7.500 2.800 H4 V5" fill="none" stroke="#0c0c96" stroke-width="1.500"/><path d="M1.300 4 H6.700 L4 7.300 Z" fill="#0c0c96"/></svg>
<svg class="abs" style="left:325.5px;top:32.5px" width="18" height="18" viewBox="0 0 18 18"><path d="M7 8 H17 V14 L15 16 H7 Z" fill="#dcdcdc" stroke="#c4c4c4" stroke-width="0.800"/><path d="M0.8 1 H5.800000000000001 L8.3 3.5 V10.5 H0.8 Z" fill="#cfe2f7" stroke="#3f74c4" stroke-width="1"/><path d="M10 2.500 H13.500 V5" fill="none" stroke="#0c0c96" stroke-width="1.500"/><path d="M10.800 4 H16.200 L13.500 7.300 Z" fill="#0c0c96"/></svg>
<svg class="abs" style="left:351.5px;top:32.5px" width="18" height="18" viewBox="0 0 18 18"><path d="M0.5 6 H10.0 V14.5 L8.0 16.5 H0.5 Z" fill="#dcdcdc" stroke="#c4c4c4" stroke-width="0.800"/><path d="M9 0.8 H14.0 L16.5 3.3 V10.3 H9 Z" fill="#cfe2f7" stroke="#3f74c4" stroke-width="1"/><path d="M7.500 2.800 H4 V5" fill="none" stroke="#0c0c96" stroke-width="1.500"/><path d="M1.300 4 H6.700 L4 7.300 Z" fill="#0c0c96"/><path d="M9.500 15.200 H13 V13" fill="none" stroke="#0c0c96" stroke-width="1.500"/><path d="M10.300 14 H15.700 L13 10.700 Z" fill="#0c0c96"/></svg>
<svg class="abs" style="left:197px;top:29px" width="100" height="25" viewBox="1070 180 100 25"><g fill="none" stroke="#0c0c92" stroke-width="1.600"><path d="M1087.200 188.500 H1083.200 Q1081.200 188.500 1081.200 190.700 V194"/><path d="M1103 189.400 H1106.800 Q1108.800 189.400 1108.800 191.500 V195"/><path d="M1131.200 193 V196.200 Q1131.200 197.800 1132.800 197.800 H1136.200 Q1137.800 197.800 1137.800 196.200 V188.200"/></g><g fill="#0c0c92"><path d="M1076.700 193.300 H1085.100 L1080.900 198.100 Z"/><path d="M1104.500 194.400 H1113.100 L1108.800 199.200 Z"/><path d="M1126.800 193.800 H1135.600 L1131.200 188.800 Z"/></g><g fill="none" stroke="#c6d4e5" stroke-width="1.600"><path d="M1154.500 192.500 V196.500 Q1154.500 198 1156 198 H1160"/><path d="M1164.500 193.500 V190 Q1164.500 188.500 1163 188.500 H1159"/></g><g fill="#c6d4e5"><path d="M1150.500 192.800 H1158.500 L1154.500 188.200 Z"/><path d="M1160.500 193 H1168.500 L1164.500 197.600 Z"/></g></svg>
<div class="abs" style="left:0;top:56px;width:464px;height:369px;background:#fff;overflow:hidden">
<div class="abs" style="left:184.8px;top:80.5px;font-size:20.200px;line-height:24px;color:#000;white-space:nowrap;letter-spacing:0.330px">Snippets Split Example</div>
<div class="abs" style="left:185px;top:102px;width:216px;height:1.500px;background:#000"></div>
<div class="dl" style="left:51.7px;top:157.2px;letter-spacing:0.356px">Insured:  Test Insured 1</div>
<div class="dl" style="left:51.7px;top:181.3px;letter-spacing:0.373px">Policy No:  A12345678</div>
<div class="dl" style="left:51.7px;top:205.4px;letter-spacing:0.427px">Policy Eff. Date:  10/10/2019</div>
<div class="dl" style="left:51.7px;top:229.5px;letter-spacing:0.393px">Policy Exp. Date:  10/10/2020</div>
<div class="dl" style="left:51.7px;top:253.6px;letter-spacing:0.578px">Premium Amount: $1,000</div>
<div class="dl" style="left:315.3px;top:157.2px;letter-spacing:0.380px">Insurer: Test Insurer  1</div>
<div class="dl" style="left:312.8px;top:181.3px;letter-spacing:0.334px">Agency: Test Agency 2</div>
<div class="abs" style="left:50px;top:269px;width:400px;height:1.400px;background:#111"></div>
<div class="dl" style="left:51.7px;top:279.7px;letter-spacing:0.356px">Insured:  Test Insured 2</div>
<div class="dl" style="left:51.7px;top:303.8px;letter-spacing:0.373px">Policy No:  B12345678</div>
<div class="dl" style="left:51.7px;top:327.9px;letter-spacing:0.427px">Policy Eff. Date:  10/10/2019</div>
<div class="dl" style="left:312.5px;top:279.7px;letter-spacing:0.380px">Insurer: Test Insurer  2</div>
<div class="dl" style="left:312.8px;top:303.8px;letter-spacing:0.334px">Agency: Test Agency 2</div>
<div class="abs" style="left:446px;top:0;width:18px;height:369px;background:#f1f1f1"></div>
<div class="abs" style="left:0;top:351px;width:464px;height:18px;background:#f1f1f1"></div>
<div class="abs" style="left:447px;top:36px;width:16px;height:107px;background:#c8c8c8"></div>
<div class="abs" style="left:65px;top:352px;width:239px;height:15px;background:#c8c8c8"></div>
<svg class="abs" style="left:446.500px;top:13px" width="17" height="17" viewBox="0 0 17 17"><path d="M2.800 12.500 L8.500 6.800 L14.200 12.500" fill="none" stroke="#555" stroke-width="3"/></svg>
<svg class="abs" style="left:446.500px;top:320px" width="17" height="17" viewBox="0 0 17 17"><path d="M2.800 5.500 L8.500 11.200 L14.200 5.500" fill="none" stroke="#555" stroke-width="3"/></svg>
<svg class="abs" style="left:14px;top:350.5px" width="17" height="17" viewBox="0 0 17 17"><path d="M12 2.800 L6.300 8.500 L12 14.200" fill="none" stroke="#555" stroke-width="3"/></svg>
<svg class="abs" style="left:415px;top:350.5px" width="17" height="17" viewBox="0 0 17 17"><path d="M5.500 2.800 L11.200 8.500 L5.500 14.200" fill="none" stroke="#555" stroke-width="3"/></svg>
</div>
</div>
</div>
<div class="panel" style="left:0;top:583px;width:1340px;height:190px;border-left-width:2px;border-right-width:2px">
<div class="phd" style="height:26px"><div class="t" style="left:8.500px;top:5px;letter-spacing:-0.050px">Thumbnails</div><div class="tool" style="left:1298.300px;top:3.500px"><svg width="13" height="13" viewBox="0 0 13 13"><path d="M3.500 2.800 L6.500 5.800 L9.500 2.800 M3.500 6.800 L6.500 9.800 L9.500 6.800" fill="none" stroke="#3f74c0" stroke-width="1.500"/></svg></div><div class="tool" style="left:1315.800px;top:3.500px"><svg width="13" height="13" viewBox="0 0 13 13"><circle cx="6.800" cy="6.500" r="3.950" fill="none" stroke="url(#gGear)" stroke-width="1.500" stroke-dasharray="1.850 1.252"/><circle cx="6.800" cy="6.500" r="3.600" fill="url(#gGear)"/><circle cx="6.600" cy="6.300" r="1.250" fill="none" stroke="#c3c9ee" stroke-width="0.800"/></svg></div></div>
<div class="abs" style="left:0;top:26px;width:1318px;height:27px;border-top:1px solid #99bbe8;border-bottom:1px solid #99bbe8;background:#cbddf3"></div>
<div class="abs" style="left:0;top:26px;width:1px;height:160px;background:#99bbe8;opacity:0.6"></div>
<div class="abs" style="left:9.500px;top:32px;font-size:12px;font-weight:bold;color:#15428b;line-height:15px;white-space:nowrap;letter-spacing:0.120px">Document: Policy Details (1)</div>
<div class="tool" style="left:1296px;top:31px"><svg width="13" height="13" viewBox="0 0 13 13"><path d="M3.500 5.800 L6.500 2.800 L9.500 5.800 M3.500 9.800 L6.500 6.800 L9.500 9.800" fill="none" stroke="#3f74c0" stroke-width="1.500"/></svg></div>
<div class="abs" style="left:1318px;top:27px;width:18px;height:160px;background:#f1f1f1"></div>
<div class="abs" style="left:1318.800px;top:62px;width:15.700px;height:88px;background:#c8c8c8"></div><div class="abs" style="left:1317px;top:27px;width:1px;height:160px;background:#99bbe8"></div>
<svg class="abs" style="left:1318.500px;top:40px" width="17" height="17" viewBox="0 0 17 17"><path d="M2.800 12.500 L8.500 6.800 L14.200 12.500" fill="none" stroke="#555" stroke-width="3"/></svg>
<svg class="abs" style="left:1318.500px;top:155.500px" width="17" height="17" viewBox="0 0 17 17"><path d="M2.800 5.500 L8.500 11.200 L14.200 5.500" fill="none" stroke="#555" stroke-width="3"/></svg>
<div class="abs" style="left:16px;top:68px;width:86px;height:105px;background:#a9c5ec"></div>
<div class="abs" style="left:19.600px;top:71.700px;width:78.800px;height:98px;border:2.600px solid #1a4a98;background:#fff"></div>
<svg class="abs" style="left:22px;top:74px" width="74" height="94" viewBox="0 0 74 94"><rect x="27" y="11.300" width="21" height="1.500" fill="#8a8a8a"/><rect x="14" y="18.5" width="11" height="0.800" fill="#b4b4b4"/><rect x="39" y="18.5" width="10.500" height="0.800" fill="#b4b4b4"/><rect x="14" y="20.9" width="11" height="0.800" fill="#b4b4b4"/><rect x="39" y="20.9" width="10.500" height="0.800" fill="#b4b4b4"/><rect x="14" y="23.2" width="14" height="0.800" fill="#b4b4b4"/><rect x="14" y="25.6" width="14" height="0.800" fill="#b4b4b4"/><rect x="14" y="27.9" width="12" height="0.800" fill="#b4b4b4"/><rect x="14" y="29.4" width="47" height="0.500" fill="#aaa"/><rect x="14" y="30.6" width="11" height="0.800" fill="#b4b4b4"/><rect x="39" y="30.6" width="10.500" height="0.800" fill="#b4b4b4"/><rect x="14" y="32.9" width="11" height="0.800" fill="#b4b4b4"/><rect x="39" y="32.9" width="10.500" height="0.800" fill="#b4b4b4"/><rect x="14" y="35.3" width="14" height="0.800" fill="#b4b4b4"/><rect x="14" y="37.6" width="14" height="0.800" fill="#b4b4b4"/><rect x="14" y="40.0" width="12" height="0.800" fill="#b4b4b4"/><rect x="14" y="41.4" width="47" height="0.500" fill="#aaa"/><rect x="14" y="42.6" width="11" height="0.800" fill="#b4b4b4"/><rect x="39" y="42.6" width="10.500" height="0.800" fill="#b4b4b4"/><rect x="14" y="45.0" width="11" height="0.800" fill="#b4b4b4"/><rect x="39" y="45.0" width="10.500" height="0.800" fill="#b4b4b4"/><rect x="14" y="47.3" width="14" height="0.800" fill="#b4b4b4"/><rect x="14" y="49.7" width="14" height="0.800" fill="#b4b4b4"/><rect x="14" y="52.0" width="12" height="0.800" fill="#b4b4b4"/><rect x="14" y="53.5" width="47" height="0.500" fill="#aaa"/><rect x="14" y="54.7" width="11" height="0.800" fill="#b4b4b4"/><rect x="39" y="54.7" width="10.500" height="0.800" fill="#b4b4b4"/><rect x="14" y="57.0" width="11" height="0.800" fill="#b4b4b4"/><rect x="39" y="57.0" width="10.500" height="0.800" fill="#b4b4b4"/><rect x="14" y="59.4" width="14" height="0.800" fill="#b4b4b4"/><rect x="14" y="61.7" width="14" height="0.800" fill="#b4b4b4"/><rect x="14" y="64.1" width="12" height="0.800" fill="#b4b4b4"/><rect x="14" y="65.5" width="47" height="0.500" fill="#aaa"/><rect x="14" y="66.7" width="11" height="0.800" fill="#b4b4b4"/><rect x="39" y="66.7" width="10.500" height="0.800" fill="#b4b4b4"/><rect x="14" y="69.0" width="11" height="0.800" fill="#b4b4b4"/><rect x="39" y="69.0" width="10.500" height="0.800" fill="#b4b4b4"/><rect x="14" y="71.4" width="14" height="0.800" fill="#b4b4b4"/><rect x="14" y="73.7" width="14" height="0.800" fill="#b4b4b4"/><rect x="14" y="76.1" width="12" height="0.800" fill="#b4b4b4"/><rect x="14" y="77.5" width="47" height="0.500" fill="#aaa"/></svg>
</div>
<div id="lstrip" class="abs" style="left:0;top:578px;width:2px;height:6px;background:#99bbe8"></div>
<div class="abs" style="left:1338px;top:578px;width:2px;height:6px;background:#99bbe8"></div>
<div class="abs" style="left:0;top:764px;width:1343px;height:1px;background:#ececec"></div>
</body>
</html>
